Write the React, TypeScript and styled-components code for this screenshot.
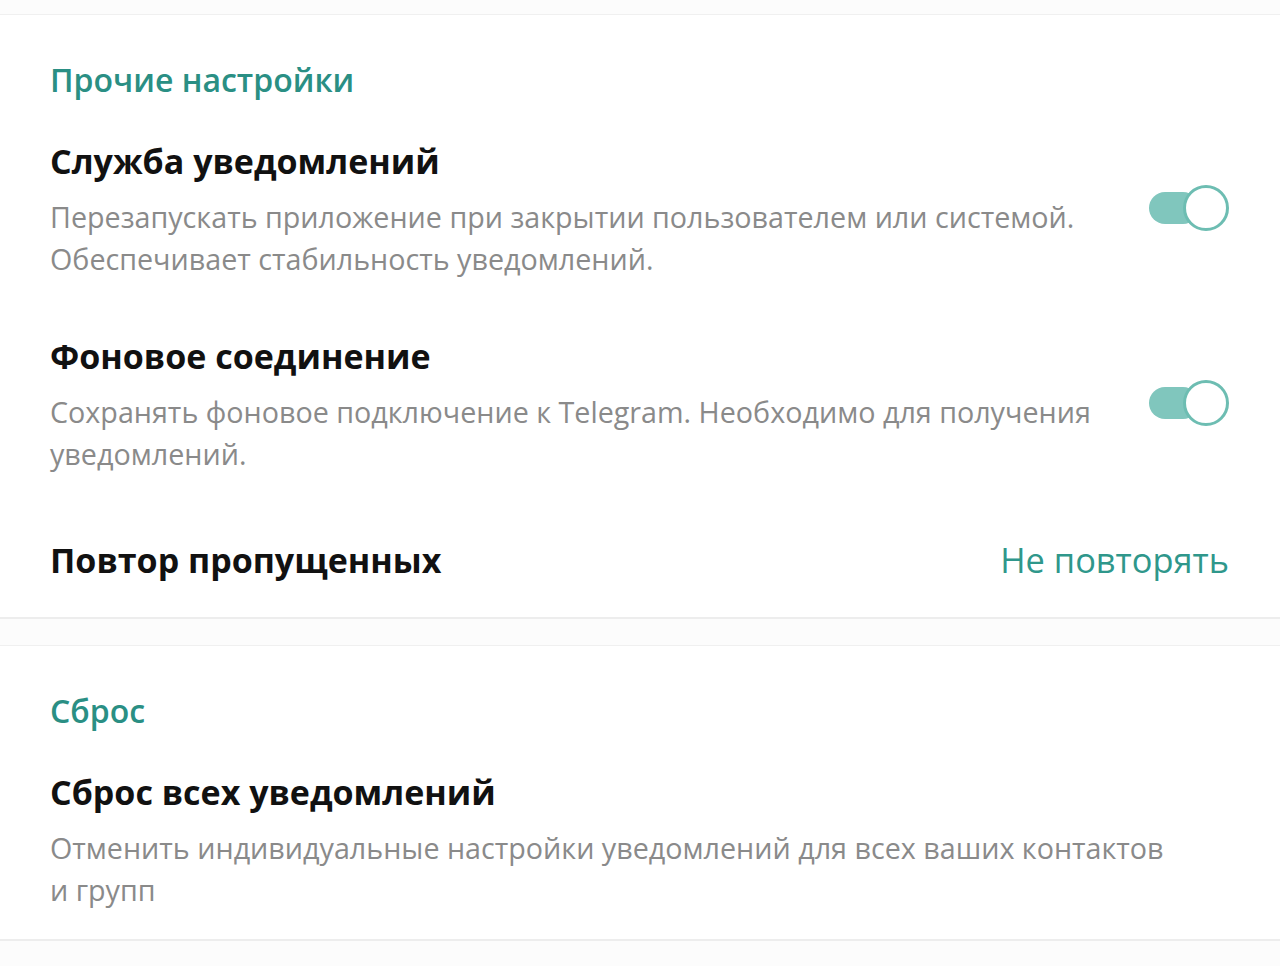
import React from "react";
import styled, { createGlobalStyle } from "styled-components";

const GlobalStyle = createGlobalStyle`
  html, body {
    margin: 0;
    padding: 0;
    background: #fcfcfc;
  }
  body {
    font-family: "Open Sans", "Noto Sans", sans-serif;
  }
`;

const Page = styled.div`
  width: 1280px;
  min-height: 966px;
  padding-top: 14px;
  background: #fcfcfc;
`;

const Card = styled.section`
  background: #fff;
  border-top: 1px solid #f0f0f0;
  border-bottom: 2px solid #ededed;
  padding-top: 45px;
  & + & {
    margin-top: 26px;
  }
`;

const SectionTitle = styled.h2`
  margin: 0 0 13px 0;
  padding: 0 50px;
  font-size: 32px;
  line-height: 40px;
  font-weight: 600;
  color: #2a8f84;
`;

const Row = styled.div<{ $pad?: number }>`
  display: flex;
  align-items: center;
  justify-content: space-between;
  padding: ${(p) => p.$pad ?? 28}px 51px ${(p) => p.$pad ?? 28}px 50px;
`;

const Texts = styled.div`
  display: flex;
  flex-direction: column;
`;

const Title = styled.div`
  font-size: 34px;
  line-height: 40px;
  font-weight: 700;
  color: #111;
`;

const Desc = styled.div`
  margin-top: 15px;
  font-size: 28.7px;
  line-height: 42px;
  color: #8a8a8a;
  white-space: nowrap;
`;

const Value = styled.div`
  font-size: 34.4px;
  line-height: 40px;
  color: #2f978b;
`;

const Toggle = styled.div`
  position: relative;
  width: 80px;
  height: 46px;
  margin-bottom: 6px;
  flex-shrink: 0;
`;

const Track = styled.div`
  position: absolute;
  left: 0;
  top: 7px;
  width: 50px;
  height: 32px;
  border-radius: 16px;
  background: #80c6bd;
`;

const Knob = styled.div`
  position: absolute;
  right: 0;
  top: 0;
  width: 46px;
  height: 46px;
  box-sizing: border-box;
  border-radius: 50%;
  border: 3px solid #6dbdb2;
  background: #fff;
`;

const Switch = () => (
  <Toggle>
    <Track />
    <Knob />
  </Toggle>
);

export default function App() {
  return (
    <Page>
      <GlobalStyle />
      <Card>
        <SectionTitle>Прочие настройки</SectionTitle>
        <Row>
          <Texts>
            <Title>Служба уведомлений</Title>
            <Desc>
              Перезапускать приложение при закрытии пользователем или системой.
              <br />
              Обеспечивает стабильность уведомлений.
            </Desc>
          </Texts>
          <Switch />
        </Row>
        <Row>
          <Texts>
            <Title>Фоновое соединение</Title>
            <Desc>
              Сохранять фоновое подключение к Telegram. Необходимо для получения
              <br />
              уведомлений.
            </Desc>
          </Texts>
          <Switch />
        </Row>
        <Row $pad={37}>
          <Title>Повтор пропущенных</Title>
          <Value>Не повторять</Value>
        </Row>
      </Card>
      <Card>
        <SectionTitle>Сброс</SectionTitle>
        <Row>
          <Texts>
            <Title>Сброс всех уведомлений</Title>
            <Desc>
              Отменить индивидуальные настройки уведомлений для всех ваших контактов
              <br />и групп
            </Desc>
          </Texts>
        </Row>
      </Card>
    </Page>
  );
}
